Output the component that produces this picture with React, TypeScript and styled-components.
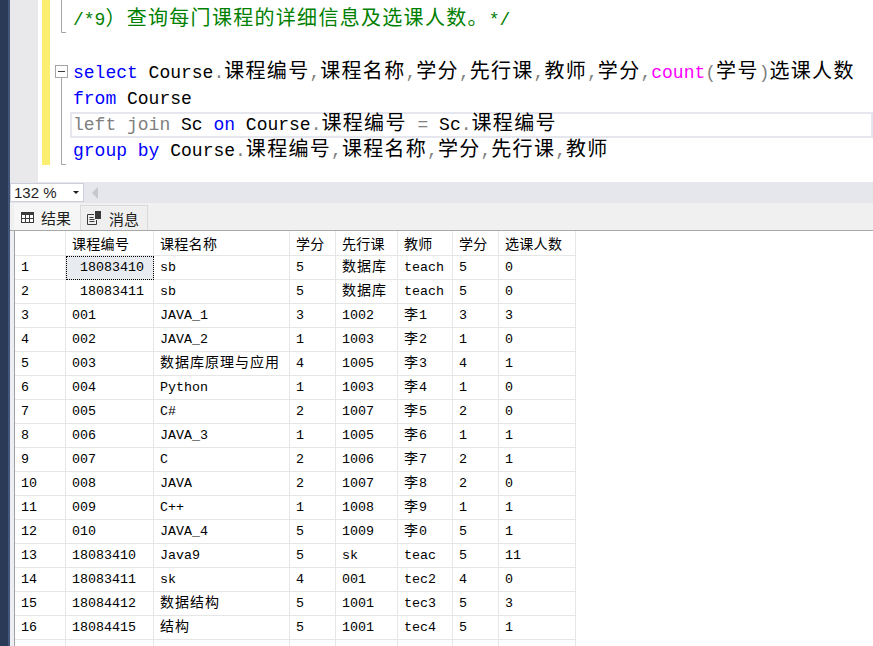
import React from 'react';
import styled, { createGlobalStyle } from 'styled-components';

const GlobalStyle = createGlobalStyle`
  html, body {
    margin: 0;
    padding: 0;
    background: #ffffff;
    overflow: hidden;
  }
  body {
    font-family: "Liberation Sans", "Noto Sans CJK SC", sans-serif;
  }
`;

const Page = styled.div`
  display: flex;
  width: 873px;
  height: 646px;
`;

const NavStrip = styled.div`
  width: 10px;
  flex-shrink: 0;
  background: linear-gradient(to right, #2b3a57 0 8px, #44557a 8px);
`;

const Main = styled.div`
  flex: 1;
  min-width: 0;
  display: flex;
  flex-direction: column;
`;

/* ---------- editor ---------- */

const Editor = styled.div`
  height: 182px;
  display: flex;
  background: #ffffff;
  flex-shrink: 0;
`;

const LineMargin = styled.div`
  width: 28px;
  background: #e9e9eb;
`;

const MarginGap = styled.div`
  width: 4px;
`;

const ChangeBar = styled.div`
  width: 8px;
  height: 165px;
  background: #fcee70;
`;

const Gutter = styled.div`
  width: 20px;
`;

const Code = styled.div`
  flex: 1;
  min-width: 0;
  padding-top: 7px;
`;

const CodeLine = styled.div<{ $current?: boolean }>`
  height: 26.3px;
  line-height: 26.3px;
  padding-left: 3px;
  white-space: pre;
  font-family: "Liberation Mono", monospace;
  font-size: 18px;
  color: #000000;
  box-shadow: ${p => (p.$current ? 'inset 0 0 0 2px #e6e6ef' : 'none')};
`;

const tokenColors: Record<string, string> = {
  kw: '#0000ff',
  op: '#808080',
  fn: '#ff00ff',
  cm: '#008000',
  tx: '#000000',
};

const Token = styled.span<{ $kind: string }>`
  color: ${p => tokenColors[p.$kind]};
`;

const CjkRun = styled.span<{ $variant: 'code' | 'cell' | 'head' }>`
  font-family: "Noto Sans CJK SC", sans-serif;
  font-size: ${p => (p.$variant === 'code' ? '20px' : '14px')};
  letter-spacing: ${p => (p.$variant === 'head' ? '0.3px' : p.$variant === 'code' ? '1.3px' : '1px')};
  line-height: 1;
  vertical-align: baseline;
`;

/* ---------- zoom bar ---------- */

const ZoomBar = styled.div`
  height: 21px;
  flex-shrink: 0;
  background: #e6e7ed;
  display: flex;
  align-items: center;
  gap: 8px;
`;

const ZoomCombo = styled.div`
  width: 74px;
  height: 19px;
  box-sizing: border-box;
  border: 1px solid #cccedb;
  background: #ffffff;
  display: flex;
  align-items: center;
  justify-content: space-between;
  padding: 0 4px 0 3px;
  font-family: "Liberation Sans", sans-serif;
  font-size: 15px;
  color: #1e1e1e;
`;

const ComboArrow = styled.span`
  width: 0;
  height: 0;
  border-left: 3px solid transparent;
  border-right: 3px solid transparent;
  border-top: 3px solid #1e1e1e;
`;

const ScrollLeft = styled.span`
  width: 0;
  height: 0;
  border-top: 6px solid transparent;
  border-bottom: 6px solid transparent;
  border-right: 6px solid #c6c6cc;
`;

/* ---------- tabs ---------- */

const TabBar = styled.div`
  height: 27px;
  flex-shrink: 0;
  background: #f0f0f0;
  border-bottom: 1px solid #a9a9a9;
  padding-left: 4px;
  display: flex;
  align-items: flex-end;
`;

const Tab = styled.div<{ $active?: boolean }>`
  height: ${p => (p.$active ? '27px' : '25px')};
  box-sizing: border-box;
  padding: 0 8px 0 6px;
  display: flex;
  align-items: center;
  gap: 7px;
  background: ${p => (p.$active ? '#f6f6f6' : '#efefef')};
  border: 1px solid ${p => (p.$active ? '#f6f6f6' : '#d9d9d9')};
  border-bottom: none;
  font-family: "Noto Sans CJK SC", sans-serif;
  font-size: 15px;
  color: #1e1e1e;
`;

/* ---------- results grid ---------- */

const Results = styled.div`
  flex: 1;
  min-height: 0;
  display: flex;
  border-left: 4px solid #eceef3;
  background: #ffffff;
  overflow: hidden;
`;

const Grid = styled.div`
  display: grid;
  grid-template-columns: 51px 88px 136px 46px 62px 55px 46px 77px;
  grid-template-rows: 25px;
  grid-auto-rows: 24px;
  align-content: start;
  border-left: 1px solid #a0a0a0;
  background: #ffffff;
`;

const Cell = styled.div<{ $selected?: boolean }>`
  box-sizing: border-box;
  border-right: 1px solid #e6e6e6;
  border-bottom: 1px solid #e6e6e6;
  padding-left: 6px;
  white-space: pre;
  overflow: hidden;
  line-height: 23px;
  font-family: "Liberation Mono", monospace;
  font-size: 13.33px;
  color: #000000;
  background: ${p => (p.$selected ? '#e8ecf0' : 'transparent')};
  outline: ${p => (p.$selected ? '1px dotted #000000' : 'none')};
  outline-offset: -1px;
`;

const HeadCell = styled(Cell)`
  font-family: "Noto Sans CJK SC", sans-serif;
  font-size: 14px;
  line-height: 24px;
`;

/* ---------- helpers ---------- */

const CJK = /[\u2e80-\u9fff\u3000-\u303f\uff00-\uffef]/;

function splitRuns(text: string) {
  const out: { cjk: boolean; s: string }[] = [];
  for (const ch of text) {
    const c = CJK.test(ch);
    const last = out[out.length - 1];
    if (last && last.cjk === c) last.s += ch;
    else out.push({ cjk: c, s: ch });
  }
  return out;
}

const Mixed: React.FC<{ text: string; variant: 'code' | 'cell' | 'head' }> = ({ text, variant }) => (
  <>
    {splitRuns(text).map((r, i) =>
      r.cjk ? (
        <CjkRun key={i} $variant={variant}>
          {r.s}
        </CjkRun>
      ) : (
        <React.Fragment key={i}>{r.s}</React.Fragment>
      )
    )}
  </>
);

type Tok = [string, string];

const codeLines: { tokens: Tok[]; current?: boolean }[] = [
  { tokens: [['cm', '/*9）查询每门课程的详细信息及选课人数。*/']] },
  { tokens: [] },
  {
    tokens: [
      ['kw', 'select'], ['tx', ' Course'], ['op', '.'], ['tx', '课程编号'], ['op', ','],
      ['tx', '课程名称'], ['op', ','], ['tx', '学分'], ['op', ','], ['tx', '先行课'], ['op', ','],
      ['tx', '教师'], ['op', ','], ['tx', '学分'], ['op', ','], ['fn', 'count'], ['op', '('],
      ['tx', '学号'], ['op', ')'], ['tx', '选课人数'],
    ],
  },
  { tokens: [['kw', 'from'], ['tx', ' Course']] },
  {
    current: true,
    tokens: [
      ['op', 'left join'], ['tx', ' Sc '], ['kw', 'on'], ['tx', ' Course'], ['op', '.'],
      ['tx', '课程编号 '], ['op', '='], ['tx', ' Sc'], ['op', '.'], ['tx', '课程编号'],
    ],
  },
  {
    tokens: [
      ['kw', 'group by'], ['tx', ' Course'], ['op', '.'], ['tx', '课程编号'], ['op', ','],
      ['tx', '课程名称'], ['op', ','], ['tx', '学分'], ['op', ','], ['tx', '先行课'], ['op', ','],
      ['tx', '教师'],
    ],
  },
];

const headers = ['', '课程编号', '课程名称', '学分', '先行课', '教师', '学分', '选课人数'];

const rows: string[][] = [
  [' 18083410', 'sb', '5', '数据库', 'teach', '5', '0'],
  [' 18083411', 'sb', '5', '数据库', 'teach', '5', '0'],
  ['001', 'JAVA_1', '3', '1002', '李1', '3', '3'],
  ['002', 'JAVA_2', '1', '1003', '李2', '1', '0'],
  ['003', '数据库原理与应用', '4', '1005', '李3', '4', '1'],
  ['004', 'Python', '1', '1003', '李4', '1', '0'],
  ['005', 'C#', '2', '1007', '李5', '2', '0'],
  ['006', 'JAVA_3', '1', '1005', '李6', '1', '1'],
  ['007', 'C', '2', '1006', '李7', '2', '1'],
  ['008', 'JAVA', '2', '1007', '李8', '2', '0'],
  ['009', 'C++', '1', '1008', '李9', '1', '1'],
  ['010', 'JAVA_4', '5', '1009', '李0', '5', '1'],
  ['18083410', 'Java9', '5', 'sk', 'teac', '5', '11'],
  ['18083411', 'sk', '4', '001', 'tec2', '4', '0'],
  ['18084412', '数据结构', '5', '1001', 'tec3', '5', '3'],
  ['18084415', '结构', '5', '1001', 'tec4', '5', '1'],
];

const OutlineGlyphs = () => (
  <svg width="20" height="182" viewBox="0 0 20 182">
    <g stroke="#a5a5a5" strokeWidth="1" fill="none">
      <path d="M11.5 0 V32.5 H16" />
      <rect x="5.5" y="65.5" width="12" height="12" />
      <path d="M11.5 78 V164.5 H16" />
    </g>
    <path d="M8 71.5 H15" stroke="#3c3c3c" strokeWidth="1" />
  </svg>
);

const GridIcon = () => (
  <svg width="13" height="11" viewBox="0 0 13 11">
    <rect x="0.5" y="0.5" width="12" height="10" fill="#ffffff" stroke="#3a3a3a" />
    <rect x="0.5" y="0.5" width="12" height="2.5" fill="#3a3a3a" />
    <path d="M0.5 6.5 H12.5 M4.5 3 V10.5 M8.5 3 V10.5" stroke="#3a3a3a" />
  </svg>
);

const MessageIcon = () => (
  <svg width="15" height="14" viewBox="0 0 15 14">
    <path d="M0.5 3.5 H7 M0.5 3.5 V13.5 H9.5 V9" stroke="#3a3a3a" fill="none" />
    <path d="M2.5 6.5 H6.5 M2.5 8.5 H7.5 M2.5 10.5 H7.5" stroke="#3a3a3a" />
    <rect x="8" y="0" width="6" height="8" fill="#3a3a3a" />
  </svg>
);

export default function App() {
  return (
    <Page>
      <GlobalStyle />
      <NavStrip />
      <Main>
        <Editor>
          <LineMargin />
          <MarginGap />
          <ChangeBar />
          <Gutter>
            <OutlineGlyphs />
          </Gutter>
          <Code>
            {codeLines.map((line, i) => (
              <CodeLine key={i} $current={line.current}>
                {line.tokens.map(([kind, text], j) => (
                  <Token key={j} $kind={kind}>
                    <Mixed text={text} variant="code" />
                  </Token>
                ))}
              </CodeLine>
            ))}
          </Code>
        </Editor>

        <ZoomBar>
          <ZoomCombo>
            <span>132 %</span>
            <ComboArrow />
          </ZoomCombo>
          <ScrollLeft />
        </ZoomBar>

        <TabBar>
          <Tab $active>
            <GridIcon />
            结果
          </Tab>
          <Tab>
            <MessageIcon />
            消息
          </Tab>
        </TabBar>

        <Results>
          <Grid>
            {headers.map((h, i) => (
              <HeadCell key={'h' + i}>
                <Mixed text={h} variant="head" />
              </HeadCell>
            ))}
            {rows.map((row, r) => (
              <React.Fragment key={r}>
                <Cell>{r + 1}</Cell>
                {row.map((v, c) => (
                  <Cell key={c} $selected={r === 0 && c === 0}>
                    <Mixed text={v} variant="cell" />
                  </Cell>
                ))}
              </React.Fragment>
            ))}
            {headers.map((_, i) => (
              <Cell key={'e' + i} />
            ))}
          </Grid>
        </Results>
      </Main>
    </Page>
  );
}
